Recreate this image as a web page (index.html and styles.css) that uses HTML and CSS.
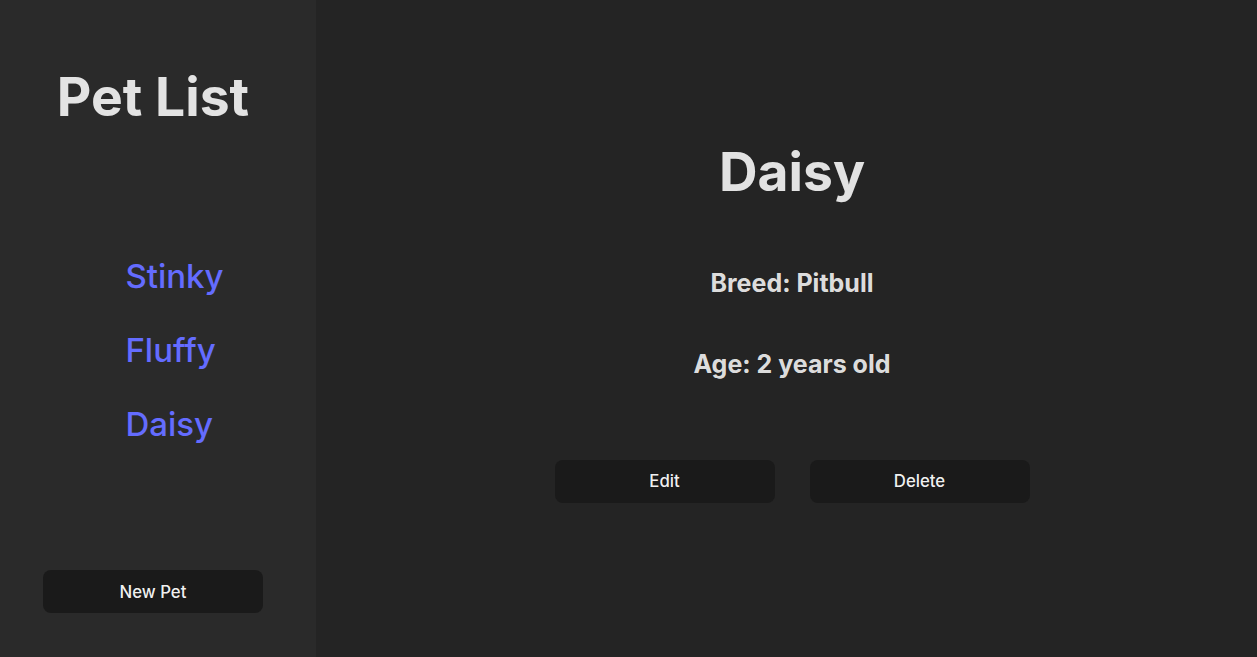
FILE: index.html
```html
<!DOCTYPE html>
<html lang="en">
<head>
<meta charset="utf-8">
<title>Pet List</title>
<link rel="stylesheet" href="styles.css">
</head>
<body>
<div class="app">
  <aside class="sidebar">
    <h1 class="sidebar-title">Pet List</h1>
    <ul class="pet-list">
      <li><a href="#" class="pet-link">Stinky</a></li>
      <li><a href="#" class="pet-link">Fluffy</a></li>
      <li><a href="#" class="pet-link">Daisy</a></li>
    </ul>
    <button class="btn btn-new">New Pet</button>
  </aside>
  <main class="detail">
    <h1 class="detail-name">Daisy</h1>
    <h2 class="detail-info breed">Breed: Pitbull</h2>
    <h2 class="detail-info age">Age: 2 years old</h2>
    <div class="actions">
      <button class="btn">Edit</button>
      <button class="btn">Delete</button>
    </div>
  </main>
</div>
</body>
</html>
```
FILE: styles.css
```css
html, body {
  margin: 0;
  padding: 0;
  height: 100%;
}
body {
  font-family: Inter, "Liberation Sans", sans-serif;
  line-height: 1.5;
  font-weight: 400;
  color: rgba(255, 255, 255, 0.87);
  background: #242424;
  overflow: hidden;
}
.app {
  display: flex;
  height: 657px;
}
.sidebar {
  width: 306px;
  padding-right: 10px;
  background: #2a2a2a;
  display: flex;
  flex-direction: column;
  align-items: center;
}
.sidebar-title {
  font-size: 53.4px;
  line-height: 1.1;
  font-weight: 700;
  margin: 68px 0 0;
}
.pet-list {
  list-style: none;
  margin: 125px 0 0;
  padding: 0 0 0 43px;
  display: flex;
  flex-direction: column;
  gap: 26px;
}
.pet-list li {
  line-height: 48px;
  font-size: 16px;
}
.pet-link {
  display: block;
  font-size: 33px;
  line-height: 48px;
  font-weight: 500;
  color: #646cff;
  text-decoration: none;
}
.btn {
  width: 220px;
  border-radius: 8px;
  border: none;
  padding: 9.5px 1.2em;
  font-size: 16.8px;
  line-height: 24px;
  font-weight: 500;
  font-family: inherit;
  background: #1a1a1a;
  color: rgba(255, 255, 255, 0.95);
  cursor: pointer;
}
.btn-new {
  margin-top: auto;
  margin-bottom: 44px;
}
.detail {
  flex: 1;
  padding-left: 11px;
  display: flex;
  flex-direction: column;
  align-items: center;
}
.detail-name {
  font-size: 53.4px;
  line-height: 1.1;
  font-weight: 700;
  margin: 143px 0 0;
}
.detail-info {
  font-size: 25px;
  line-height: 1.5;
  font-weight: 700;
  margin: 0;
}
.breed {
  margin-top: 63px;
}
.age {
  margin-top: 44px;
}
.actions {
  display: flex;
  gap: 35px;
  margin-top: 76px;
}
```
